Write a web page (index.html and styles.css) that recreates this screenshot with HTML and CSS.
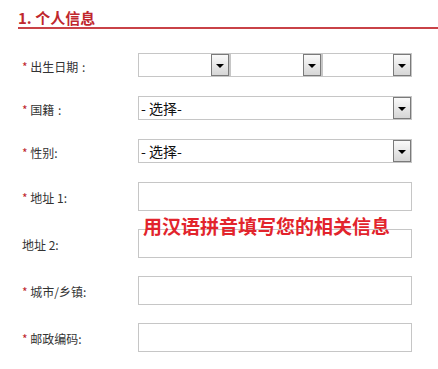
FILE: index.html
```html
<!DOCTYPE html>
<html lang="zh-CN">
<head>
<meta charset="utf-8">
<title>个人信息</title>
<link rel="stylesheet" href="styles.css">
</head>
<body>
<div class="page">
  <h2 class="section-title">1. 个人信息</h2>
  <div class="form">
    <div class="row row-select">
      <label class="label"><span class="req">*</span> 出生日期 <span class="colon">:</span></label>
      <div class="control date">
        <div class="select w92"><span class="value"></span><span class="arrow"></span></div>
        <div class="select w92"><span class="value"></span><span class="arrow"></span></div>
        <div class="select w90"><span class="value"></span><span class="arrow"></span></div>
      </div>
    </div>
    <div class="row row-select">
      <label class="label"><span class="req">*</span> 国籍 <span class="colon">:</span></label>
      <div class="control">
        <div class="select full"><span class="value">- 选择-</span><span class="arrow"></span></div>
      </div>
    </div>
    <div class="row row-select">
      <label class="label"><span class="req">*</span> 性别:</label>
      <div class="control">
        <div class="select full"><span class="value">- 选择-</span><span class="arrow"></span></div>
      </div>
    </div>
    <div class="row row-input">
      <label class="label"><span class="req">*</span> 地址 1:</label>
      <div class="control"><div class="input"></div></div>
    </div>
    <div class="row row-input">
      <label class="label">地址 2:</label>
      <div class="control"><div class="input"></div></div>
    </div>
    <div class="row row-input">
      <label class="label"><span class="req">*</span> 城市/乡镇:</label>
      <div class="control"><div class="input"></div></div>
    </div>
    <div class="row row-input">
      <label class="label"><span class="req">*</span> 邮政编码:</label>
      <div class="control"><div class="input"></div></div>
    </div>
    <div class="note">用汉语拼音填写您的相关信息</div>
  </div>
</div>
</body>
</html>
```

FILE: styles.css
```css
* { box-sizing: border-box; }
html, body { margin: 0; padding: 0; background: #fff; }
body {
  font-family: "Noto Sans CJK SC", "DejaVu Sans", sans-serif;
  color: #333;
  width: 438px;
  height: 369px;
  overflow: hidden;
}
.page { padding-left: 18px; }
.section-title {
  margin: 0;
  padding-top: 9px;
  height: 29px;
  font-size: 15px;
  line-height: 18px;
  font-weight: bold;
  color: #c0272d;
  border-bottom: 2px solid #c94247;
}
.form {
  position: relative;
  padding-left: 4px;
  padding-top: 24px;
}
.row {
  display: flex;
  align-items: center;
  margin-bottom: 19px;
}
.row-select { height: 24px; }
.row-input { height: 28px; }
.label {
  width: 116px;
  font-size: 12px;
  line-height: 14px;
  padding-top: 4px;
  color: #333;
}
.colon { margin-left: 1px; }
.req { color: #c0272d; }
.control { width: 274px; display: flex; }
.select {
  position: relative;
  height: 24px;
  border: 1px solid #c6c6c6;
  background: #fff;
  display: flex;
  align-items: center;
}
.w92 { width: 92px; }
.w90 { width: 90px; }
.full { width: 274px; }
.value {
  flex: 1;
  padding-left: 2px;
  font-size: 14px;
  line-height: 18px;
  color: #111;
}
.arrow {
  width: 18px;
  height: 22px;
  border: 1px solid #7a7a7a;
  background: linear-gradient(#fafafa, #d6d6d6);
  display: flex;
  align-items: center;
  justify-content: center;
}
.arrow::after {
  content: "";
  width: 0;
  height: 0;
  border-left: 4px solid transparent;
  border-right: 4px solid transparent;
  border-top: 4px solid #000;
  margin-top: 1px;
}
.input {
  width: 274px;
  height: 29px;
  border: 1px solid #c6c6c6;
  background: #fff;
}
.note {
  position: absolute;
  left: 125px;
  top: 186px;
  font-size: 19px;
  line-height: 22px;
  font-weight: bold;
  color: #e2242c;
  white-space: nowrap;
}
```
